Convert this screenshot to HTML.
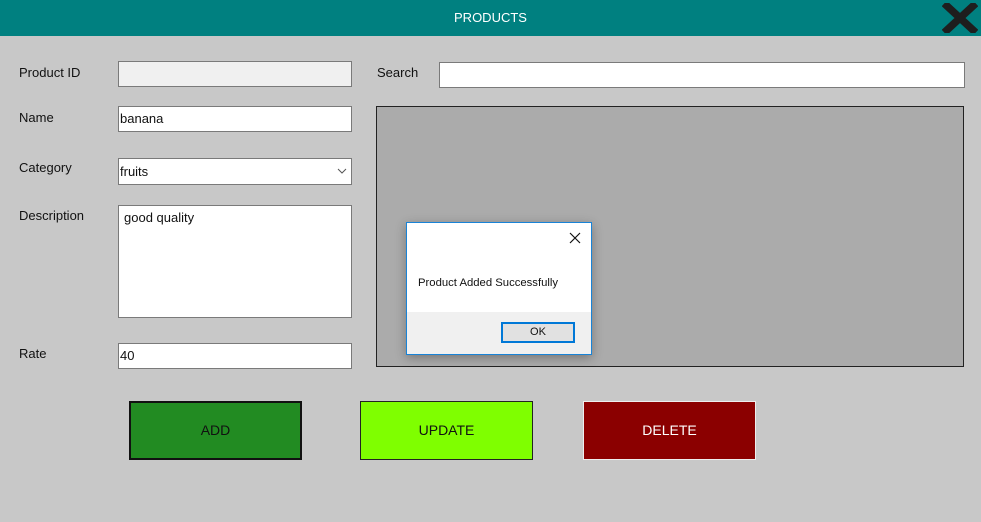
<!DOCTYPE html>
<html><head><meta charset="utf-8"><style>
*{box-sizing:border-box;margin:0;padding:0}
body{width:981px;height:522px;background:#c8c8c8;font-family:"Liberation Sans",sans-serif;position:relative;overflow:hidden;font-size:13px;color:#111}
.a{position:absolute}
.bar{left:0;top:0;width:981px;height:36px;background:#008080;color:#fff;text-align:center;line-height:35px;font-size:13px}
.lbl{font-size:13px;color:#111}
.box{border:1px solid #7a7a7a;background:#fff;font-size:13px;padding:0 1px;line-height:22px}
.btn{text-align:center;font-size:14px}
</style></head><body>
<div class="a bar">PRODUCTS</div>
<svg class="a" style="left:942px;top:3px" width="36" height="30" viewBox="0 0 36 30"><path d="M5 3 L31 27 M31 3 L5 27" stroke="#1e1e1e" stroke-width="7.5" stroke-linecap="square"/></svg>

<div class="a lbl" style="left:19px;top:65px">Product ID</div>
<div class="a box" style="left:118px;top:61px;width:234px;height:26px;background:#f0f0f0"></div>
<div class="a lbl" style="left:19px;top:110px">Name</div>
<div class="a box" style="left:118px;top:106px;width:234px;height:26px;line-height:24px">banana</div>
<div class="a lbl" style="left:19px;top:160px">Category</div>
<div class="a box" style="left:118px;top:158px;width:234px;height:27px;line-height:26px">fruits</div>
<svg class="a" style="left:337px;top:167px" width="10" height="8"><path d="M1 2 L5 6 L9 2" stroke="#555" fill="none"/></svg>
<div class="a lbl" style="left:19px;top:208px">Description</div>
<div class="a box" style="left:118px;top:205px;width:234px;height:113px;padding:3px 5px;line-height:18px">good quality</div>
<div class="a lbl" style="left:19px;top:346px">Rate</div>
<div class="a box" style="left:118px;top:343px;width:234px;height:26px;line-height:24px">40</div>

<div class="a lbl" style="left:377px;top:65px">Search</div>
<div class="a box" style="left:439px;top:62px;width:526px;height:26px"></div>
<div class="a" style="left:376px;top:106px;width:588px;height:261px;background:#ababab;border:1px solid #222"></div>

<div class="a btn" style="left:129px;top:401px;width:173px;height:59px;background:#228b22;border:2px solid #111;line-height:55px;color:#111">ADD</div>
<div class="a btn" style="left:360px;top:401px;width:173px;height:59px;background:#7fff00;border:1px solid #222;line-height:57px;color:#111">UPDATE</div>
<div class="a btn" style="left:583px;top:401px;width:173px;height:59px;background:#8b0000;border:1px solid #eee;line-height:57px;color:#fff">DELETE</div>

<div class="a" style="left:406px;top:222px;width:186px;height:133px;background:#fff;border:1px solid #1883d7;box-shadow:0 3px 10px rgba(0,0,0,.3)">
  <svg class="a" style="left:162px;top:9px" width="12" height="12"><path d="M1 1 L11 11 M11 1 L1 11" stroke="#111" stroke-width="1.2"/></svg>
  <div class="a" style="left:11px;top:54px;font-size:11.3px">Product Added Successfully</div>
  <div class="a" style="left:0;top:89px;width:184px;height:42px;background:#f0f0f0"></div>
  <div class="a" style="left:94px;top:99px;width:74px;height:21px;border:2px solid #0078d7;background:#e1e1e1;text-align:center;font-size:11px;line-height:17px">OK</div>
</div>
</body></html>
